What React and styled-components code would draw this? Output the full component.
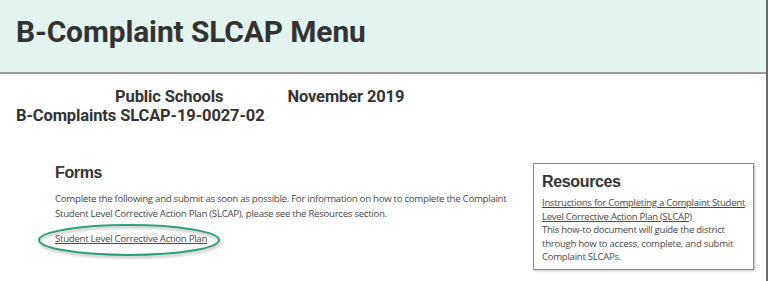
import styled, { createGlobalStyle } from 'styled-components';

const GlobalStyle = createGlobalStyle`
    html, body {
        margin: 0;
        padding: 0;
        background: #ffffff;
    }
`;

const Page = styled.div`
    width: 768px;
    height: 281px;
    box-sizing: border-box;
    border-right: 2px solid #6b6b6b;
    overflow: hidden;
    font-family: 'Open Sans', sans-serif;
    color: #444444;
`;

const Header = styled.header`
    height: 74px;
    box-sizing: border-box;
    background-color: #e3f3f0;
    border-bottom: 2px solid #9a9a9a;
    padding: 14px 0 0 16px;
`;

const Title = styled.h1`
    margin: 0;
    font-family: Roboto, sans-serif;
    font-size: 29.9px;
    font-weight: 700;
    color: #333333;
    letter-spacing: -0.1px;
`;

const Meta = styled.div`
    padding: 13px 0 0 16px;
    font-family: Roboto, sans-serif;
    font-weight: 700;
    font-size: 16.5px;
    line-height: 19px;
    color: #333333;
    letter-spacing: -0.12px;
`;

const MetaRow = styled.div`
    display: flex;
    gap: 64px;
    padding-left: ${p => p.$indent || 0}px;
`;

const Body = styled.div`
    display: flex;
    justify-content: space-between;
    padding: 38px 12px 0 55px;
`;

const Forms = styled.section`
    width: 465px;
    padding-top: 1px;
`;

const Heading = styled.h2`
    margin: 0;
    font-family: 'Liberation Sans', Arial, sans-serif;
    font-size: 16px;
    font-weight: 700;
    color: #333333;
    letter-spacing: -0.35px;
`;

const Paragraph = styled.p`
    margin: 10px 0 0;
    font-size: 9.7px;
    line-height: 14.5px;
    letter-spacing: -0.3px;
    color: #4a4a4a;
`;

const LinkWrap = styled.div`
    position: relative;
    width: fit-content;
    margin-top: 11px;
`;

const Link = styled.a`
    display: block;
    font-size: 9.7px;
    line-height: 14px;
    letter-spacing: -0.3px;
    color: #4a4a4a;
    text-decoration: underline;
`;

const Circle = styled.svg`
    position: absolute;
    left: -18px;
    top: -8px;
    overflow: visible;
`;

const ResourceBox = styled.aside`
    width: 221px;
    height: 107px;
    box-sizing: border-box;
    border: 1px solid #8a8a8a;
    box-shadow: 1px 1px 2px #00000040;
    padding: 9px 4px 0 8px;
`;

const ResourceText = styled.div`
    margin-top: 5px;
    font-size: 9.6px;
    line-height: 13.6px;
    letter-spacing: -0.28px;
    color: #4a4a4a;
`;

const ResourceLink = styled.a`
    color: #4a4a4a;
    text-decoration: underline;
    display: block;
`;

export default function App() {
    return (
        <>
            <GlobalStyle />
            <Page>
                <Header>
                    <Title>B-Complaint SLCAP Menu</Title>
                </Header>
                <Meta>
                    <MetaRow $indent={99}>
                        <span>Public Schools</span>
                        <span>November 2019</span>
                    </MetaRow>
                    <MetaRow>B-Complaints SLCAP-19-0027-02</MetaRow>
                </Meta>
                <Body>
                    <Forms>
                        <Heading>Forms</Heading>
                        <Paragraph>
                            Complete the following and submit as soon as possible. For information on how to complete the Complaint Student Level Corrective Action Plan (SLCAP), please see the Resources section.
                        </Paragraph>
                        <LinkWrap>
                            <Link>Student Level Corrective Action Plan</Link>
                            <Circle width="184" height="34" viewBox="0 0 184 34">
                                <defs>
                                    <filter id="sh" x="-10%" y="-30%" width="120%" height="160%">
                                        <feDropShadow dx="1" dy="2" stdDeviation="1.5" floodColor="#000" floodOpacity="0.3" />
                                    </filter>
                                </defs>
                                <ellipse cx="92" cy="16" rx="90" ry="15" fill="none" stroke="#2f9e7c" strokeWidth="2" filter="url(#sh)" />
                            </Circle>
                        </LinkWrap>
                    </Forms>
                    <ResourceBox>
                        <Heading>Resources</Heading>
                        <ResourceText>
                            <ResourceLink>Instructions for Completing a Complaint Student Level Corrective Action Plan (SLCAP)</ResourceLink>
                            This how-to document will guide the district through how to access, complete, and submit Complaint SLCAPs.
                        </ResourceText>
                    </ResourceBox>
                </Body>
            </Page>
        </>
    );
}
